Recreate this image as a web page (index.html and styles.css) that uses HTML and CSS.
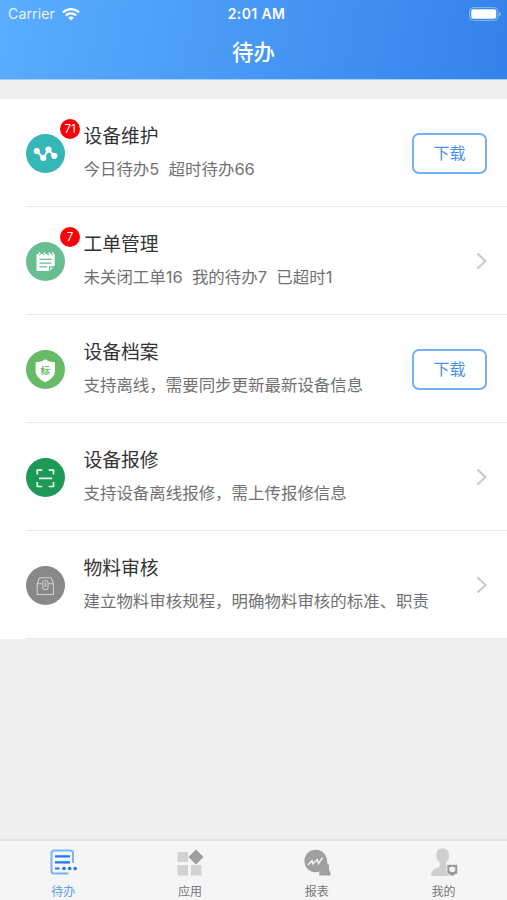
FILE: index.html
```html
<!DOCTYPE html>
<html lang="zh-CN">
<head>
<meta charset="utf-8">
<title>待办</title>
<link rel="stylesheet" href="styles.css">
</head>
<body>
<div class="app">
  <header class="header">
    <div class="status">
      <div class="carrier"><span>Carrier</span>
        <svg width="18" height="13" viewBox="0 0 18 13" fill="none" stroke="#fff" stroke-width="2.3"><path d="M1 4.4a11.4 11.4 0 0 1 16 0M3.9 7.4a7.3 7.3 0 0 1 10.2 0"/><path d="M6.3 9.8a3.9 3.9 0 0 1 5.4 0L9 12.5z" fill="#fff" stroke="none"/></svg>
      </div>
      <div class="clock">2:01 AM</div>
      <svg class="battery" width="32" height="14" viewBox="0 0 32 14"><rect x=".6" y=".6" width="28.3" height="12.8" rx="3.6" fill="none" stroke="#fff" stroke-opacity=".4"/><rect x="2.2" y="2.3" width="25" height="9.4" rx="2" fill="#fff"/><path d="M30.2 4.8q1.5.7 1.5 2.2t-1.5 2.2z" fill="#fff" opacity=".5"/></svg>
    </div>
    <h1 class="page-title">待办</h1>
  </header>
  <main class="list">
    <section class="row">
      <div class="icon teal">
        <svg width="39" height="39" viewBox="0 0 39 39"><path d="m11 17.2 6.3 6.8 5.2-8.3 5.6 6.1" fill="none" stroke="#fff" stroke-width="2"/><g fill="#fff"><circle cx="10.8" cy="17" r="3.1"/><circle cx="17.3" cy="24" r="3.1"/><circle cx="22.5" cy="15.6" r="3.1"/><circle cx="28.3" cy="21.8" r="3.1"/></g></svg>
        <span class="badge">71</span>
      </div>
      <div class="text"><h2>设备维护</h2><p>今日待办5&nbsp; 超时待办66</p></div>
      <button class="download">下载</button>
    </section>
    <section class="row">
      <div class="icon mint">
        <svg width="39" height="39" viewBox="0 0 39 39"><path d="M10.5 12h2.2l1 1.8 1.2-1.8h2l1 1.8 1.2-1.8h2l1 1.8 1.2-1.8h2l1 1.8L27.4 12h1.3v11.8l-5 5.3H10.5z" fill="#fff"/><path d="m13 10.3 1.2 2.1m3.7-2.1 1.2 2.1m3.7-2.1 1.2 2.1m2.5-2.1.6 2" stroke="#fff" stroke-width="1.4"/><path d="M13.5 17.3h12m-12 3.8h12m-12 3.8h7.6m2.4 4v-4.1h5" fill="none" stroke="#68be91" stroke-width="1.2"/></svg>
        <span class="badge">7</span>
      </div>
      <div class="text"><h2>工单管理</h2><p>未关闭工单16&nbsp; 我的待办7&nbsp; 已超时1</p></div>
      <svg class="chevron" width="12" height="18" viewBox="0 0 12 18"><path d="m2.5 1.5 8 7.5-8 7.5"/></svg>
    </section>
    <section class="row">
      <div class="icon green">
        <svg width="39" height="39" viewBox="0 0 39 39"><path d="M19.3 9.3q4 3 9.7 3v9q0 6.7-9.7 11-9.7-4.3-9.7-11v-9q5.7 0 9.7-3z" fill="#fff"/><text x="19.3" y="24" class="shield-text">标</text></svg>
      </div>
      <div class="text"><h2>设备档案</h2><p>支持离线，需要同步更新最新设备信息</p></div>
      <button class="download">下载</button>
    </section>
    <section class="row">
      <div class="icon forest">
        <svg width="39" height="39" viewBox="0 0 39 39" fill="none" stroke="#e9fff2" stroke-width="1.7"><path d="M11.3 16.5v-4.3h5m6.4 0h4.8v4.3m0 7.5v4.5h-4.8m-6.4 0h-5V24M13 20.3h13.2"/></svg>
      </div>
      <div class="text"><h2>设备报修</h2><p>支持设备离线报修，需上传报修信息</p></div>
      <svg class="chevron" width="12" height="18" viewBox="0 0 12 18"><path d="m2.5 1.5 8 7.5-8 7.5"/></svg>
    </section>
    <section class="row">
      <div class="icon gray">
        <svg width="39" height="39" viewBox="0 0 39 39" fill="none" stroke="#cfcfcf" stroke-width="1.1"><path d="M11.2 18v10.5h16.3V18l-1.8-5.3q-.3-1-1.4-1H14.4q-1.100 0-1.400 1zM11.2 17.700h5m6.300 0h5"/><rect x="16.800" y="14.800" width="5.200" height="8.700" rx="1.600"/><path d="M19.400 16.800v4.200" stroke-width="1.400"/></svg>
      </div>
      <div class="text"><h2>物料审核</h2><p>建立物料审核规程，明确物料审核的标准、职责</p></div>
      <svg class="chevron" width="12" height="18" viewBox="0 0 12 18"><path d="m2.5 1.5 8 7.5-8 7.5"/></svg>
    </section>
  </main>
  <nav class="tabs">
    <a class="tab active">
      <svg width="28" height="28" viewBox="0 0 28 28" fill="none"><path d="M24 15V5q0-2.500-2.500-2.500H5Q2.500 2.500 2.500 5v18q0 2.500 2.500 2.500h14.500" stroke="#79b4fb" stroke-width="2"/><path d="M6 8.300h15M6 14.300h15M6 20.500h4.500" stroke="#1f78f0" stroke-width="2.200"/><g fill="#1f78f0"><circle cx="15" cy="20.500" r="1.800"/><circle cx="20.700" cy="20.500" r="1.800"/><circle cx="26.200" cy="20.500" r="1.800"/></g></svg>
      <span>待办</span>
    </a>
    <a class="tab">
      <svg width="28" height="28" viewBox="0 0 28 28"><path d="M1.500 4h10.500v10H1.500zM1.500 17h10.500v10.500H1.500zM15 17h10.500v10.500H15z" fill="#d2d2d2"/><path d="m20 1.500 7.500 7.500-7.500 7.500-7.500-7.500z" fill="#9e9e9e"/></svg>
      <span>应用</span>
    </a>
    <a class="tab">
      <svg width="28" height="28" viewBox="0 0 28 28"><circle cx="12.700" cy="13" r="11.300" fill="#a0a0a0"/><path d="M22 12h2l.5 4.500H26V22l1.500 2.500v3H16.300v-3.500z" fill="#a0a0a0"/><path d="m5 17 4-4.300 1 3.200 4.200-4.300 1.200 4 4-5.800" fill="none" stroke="#f4f4f4" stroke-width="1.500"/></svg>
      <span>报表</span>
    </a>
    <a class="tab">
      <svg width="28" height="28" viewBox="0 0 28 28"><path d="M12.500.3q6.500 0 6.500 7 0 5-2.900 7.500v3q1 1.700 5.600 3.300v7H1.200q0-5.500 3.300-7 4.600-1.700 5.100-3v-3.500Q6.300 12 6.300 7.300q0-7 6.200-7z" fill="#cfcfcf"/><path d="M16.800 16.300h11v9l-5.500 3.200-5.500-3.200z" fill="#999" stroke="#f4f4f4" stroke-width="1"/><path d="m22.300 18 1 1.300h2v2.800l-1.200 1.800h-3.500l-1.300-1.800v-2.800h2z" fill="#f4f4f4"/></svg>
      <span>我的</span>
    </a>
  </nav>
</div>
</body>
</html>
```
FILE: styles.css
```css
* { box-sizing: border-box; }
body { margin: 0; font-family: "Inter", "Noto Sans CJK SC", sans-serif; background: #efefef; }
h1, h2, p { margin: 0; font-weight: 400; }
.app { height: 900px; display: flex; flex-direction: column; }
.header { height: 80px; color: #fff; background: linear-gradient(100deg, #5aadff, #3582ea); border-bottom: 1px solid #a5cffb; }
.status { height: 28px; padding: 0 6px 0 8px; display: grid; grid-template-columns: 1fr auto 1fr; align-items: center; font-size: 14px; line-height: 28px; }
.carrier { display: flex; align-items: center; gap: 7px; letter-spacing: .15px; color: #eaf5ff; }
.clock { font-weight: 600; font-size: 14px; letter-spacing: .35px; margin-left: 4px; }
.battery { justify-self: end; margin-top: -1px; }
.page-title { height: 48px; line-height: 48px; text-align: center; font-size: 21.5px; font-weight: 500; }
.list { margin-top: 19px; background: #fff; height: 540px; }
.row { height: 108px; margin-left: 26px; padding: 1px 20px 0 0; display: flex; align-items: center; border-bottom: 1px solid #e8e8e8; }
.icon { position: relative; width: 39px; height: 39px; border-radius: 50%; margin-right: 18.5px; flex: none; }
.icon svg { display: block; }
.teal { background: #35b7b8; }
.mint { background: #68be91; }
.green { background: #67bb67; }
.forest { background: #1c9954; }
.gray { background: #888; }
.shield-text { font: 700 9.5px "Noto Sans CJK SC", sans-serif; fill: #67bb67; text-anchor: middle; }
.badge { position: absolute; left: 34px; top: -15px; width: 20px; height: 20px; border-radius: 50%; background: #fb0007; color: #fff; font-size: 11.5px; line-height: 20px; text-align: center; }
.text { flex: 1; white-space: nowrap; padding-top: 1px; }
.text h2 { font-size: 18.8px; line-height: 32px; color: #333; }
.text p { font-size: 16.47px; line-height: 33px; color: #717171; }
.download { width: 75px; height: 41px; border: 2px solid #76aff3; border-radius: 7px; background: #fff; color: #4c91e8; font: 400 16px "Noto Sans CJK SC", sans-serif; padding: 0 0 2px; }
.chevron { fill: none; stroke: #c7c7cc; stroke-width: 2; }
.tabs { margin-top: auto; height: 61px; border-top: 2px solid #e2e2e2; background: #f5f5f5; display: grid; grid-template-columns: repeat(4, 1fr); }
.tab { display: flex; flex-direction: column; align-items: center; padding-top: 7px; font-size: 12px; line-height: 18px; color: #777; }
.tab span { margin-top: 7px; }
.tab.active { color: #5b9cf0; }
```
